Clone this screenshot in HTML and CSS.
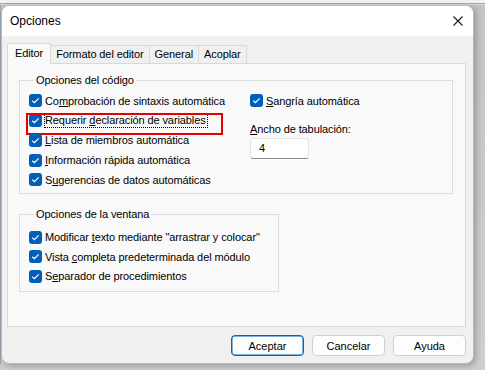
FILE: index.html
```html
<!DOCTYPE html>
<html lang="es">
<head>
<meta charset="utf-8">
<title>Opciones</title>
<link rel="stylesheet" href="styles.css">
</head>
<body>
<div class="desktop">
  <div class="topstrip"></div>
  <div class="stage">
    <div class="window">
      <div class="titlebar">
        <span class="title">Opciones</span>
        <svg class="close" width="10" height="10" viewBox="0 0 10 10"><path d="M0.5 0.5L9.5 9.5M9.5 0.5L0.5 9.5" stroke="#1a1a1a" stroke-width="1.1" fill="none"/></svg>
      </div>
      <div class="client">
        <div class="tabs">
          <div class="tab active">Editor</div>
          <div class="tab">Formato del editor</div>
          <div class="tab">General</div>
          <div class="tab">Acoplar</div>
        </div>
        <div class="panel">
          <fieldset class="group group-code">
            <legend>Opciones del código</legend>
            <div class="cols">
              <div class="col col-left">
                <div class="row"><span class="cb"><svg viewBox="0 0 13 13"><path d="M3.3 6.7L5.4 8.7L9.7 4.4" /></svg></span><span class="lbl">Co<u>m</u>probación de sintaxis automática</span></div>
                <div class="row focus"><span class="cb"><svg viewBox="0 0 13 13"><path d="M3.3 6.7L5.4 8.7L9.7 4.4" /></svg></span><span class="lbl dotted">Requerir <u>d</u>eclaración de variables</span></div>
                <div class="row"><span class="cb"><svg viewBox="0 0 13 13"><path d="M3.3 6.7L5.4 8.7L9.7 4.4" /></svg></span><span class="lbl"><u>L</u>ista de miembros automática</span></div>
                <div class="row"><span class="cb"><svg viewBox="0 0 13 13"><path d="M3.3 6.7L5.4 8.7L9.7 4.4" /></svg></span><span class="lbl"><u>I</u>nformación rápida automática</span></div>
                <div class="row"><span class="cb"><svg viewBox="0 0 13 13"><path d="M3.3 6.7L5.4 8.7L9.7 4.4" /></svg></span><span class="lbl">S<u>u</u>gerencias de datos automáticas</span></div>
              </div>
              <div class="col col-right">
                <div class="row"><span class="cb"><svg viewBox="0 0 13 13"><path d="M3.3 6.7L5.4 8.7L9.7 4.4" /></svg></span><span class="lbl"><u>S</u>angría automática</span></div>
                <div class="field-label"><u>A</u>ncho de tabulación:</div>
                <div class="input">4</div>
              </div>
            </div>
          </fieldset>
          <fieldset class="group group-win">
            <legend>Opciones de la ventana</legend>
            <div class="row"><span class="cb"><svg viewBox="0 0 13 13"><path d="M3.3 6.7L5.4 8.7L9.7 4.4" /></svg></span><span class="lbl">Modificar <u>t</u>exto mediante "arrastrar y colocar"</span></div>
            <div class="row"><span class="cb"><svg viewBox="0 0 13 13"><path d="M3.3 6.7L5.4 8.7L9.7 4.4" /></svg></span><span class="lbl">Vista <u>c</u>ompleta predeterminada del módulo</span></div>
            <div class="row"><span class="cb"><svg viewBox="0 0 13 13"><path d="M3.3 6.7L5.4 8.7L9.7 4.4" /></svg></span><span class="lbl">S<u>e</u>parador de procedimientos</span></div>
          </fieldset>
        </div>
        <div class="buttons">
          <button class="btn default">Aceptar</button>
          <button class="btn">Cancelar</button>
          <button class="btn">Ayuda</button>
        </div>
      </div>
    </div>
    <div class="shadow-right"></div>
  </div>
</div>
</body>
</html>
```

FILE: styles.css
```css
* { box-sizing: border-box; }
html, body { margin: 0; padding: 0; }
body {
  width: 485px;
  height: 370px;
  overflow: hidden;
  background: #cdcdcd;
  font-family: "Liberation Sans", Arial, sans-serif;
  font-size: 11px;
  letter-spacing: -0.1px;
  color: #000;
}
.desktop {
  display: flex;
  flex-direction: column;
  height: 370px;
  background: linear-gradient(to bottom, #c4c4c4, #cfcfcf);
}
.topstrip {
  height: 5px;
  background: linear-gradient(to bottom, #f2f2f2 0, #f2f2f2 3px, #a8a8a8 3px, #a8a8a8 4px, #dcdcdc 4px);
}
.stage {
  display: flex;
  padding-left: 1px;
  background: linear-gradient(to right, #9aa7b5 0, #9aa7b5 1px, transparent 1px);
}
.window {
  width: 473px;
  height: 359px;
  border: 1px solid #b9b9b9;
  border-radius: 8px;
  background: #f0f0f0;
  overflow: hidden;
  display: flex;
  flex-direction: column;
  box-shadow: 2px 2px 6px rgba(0,0,0,0.25);
}
.titlebar {
  height: 30px;
  background: #ffffff;
  display: flex;
  align-items: center;
  justify-content: space-between;
  padding: 0 10px 0 8px;
}
.title { font-size: 12px; line-height: 16px; letter-spacing: 0; }
.close { display: block; }
.client {
  flex: 1;
  display: flex;
  flex-direction: column;
  padding: 7px 7px 0 5px;
}
.tabs {
  display: flex;
  align-items: flex-end;
  height: 20px;
  position: relative;
  z-index: 1;
}
.tab {
  height: 18px;
  line-height: 17px;
  padding: 0 5px 0 5px;
  border: 1px solid #d9d9d9;
  border-bottom: none;
  border-left: none;
  background: #f0f0f0;
}
.tab.active {
  height: 21px;
  margin-bottom: -1px;
  padding: 1px 7px 0 7px;
  line-height: 16px;
  border-left: 1px solid #d9d9d9;
  background: #f9f9f9;
}
.panel {
  height: 264px;
  background: #f9f9f9;
  border: 1px solid #d9d9d9;
  padding: 8px 12px 0 11px;
  display: flex;
  flex-direction: column;
}
.group {
  margin: 0;
  border: 1px solid #dcdcdc;
  min-width: 0;
}
.group legend {
  padding: 0 2px;
  margin-left: 5px;
  line-height: 16px;
}
.group-code {
  height: 122px;
  padding: 3px 0 0 9px;
}
.group-win {
  width: 260px;
  height: 86px;
  margin-top: 12px;
  padding: 5.5px 0 0 9px;
}
.cols { display: flex; }
.col-left { width: 221px; }
.row {
  display: flex;
  align-items: center;
  height: 19.75px;
  position: relative;
}
.group-win .row { height: 19.5px; }
.cb {
  width: 13px;
  height: 13px;
  border-radius: 3px;
  background: #005fb8;
  flex: none;
  margin-right: 3px;
  display: block;
}
.cb svg { display: block; width: 13px; height: 13px; }
.cb path { fill: none; stroke: #ffffff; stroke-width: 1.2; }
.lbl { white-space: nowrap; line-height: 16px; }
.lbl u { text-underline-offset: 1px; }
.dotted {
  border: 1px dotted #000;
  line-height: 13px;
  margin-left: -1px;
  padding-right: 1px;
}
.focus::after {
  content: "";
  position: absolute;
  left: -3px;
  top: 2px;
  width: 193px;
  height: 18px;
  border: 2px solid #e60000;
}
.field-label {
  height: 19px;
  line-height: 20px;
  margin-top: 8px;
}
.input {
  width: 59px;
  height: 21px;
  background: #fff;
  border: 1px solid #e5e5e5;
  border-bottom: 1px solid #8a8a8a;
  border-radius: 3px;
  padding-left: 8px;
  line-height: 19px;
}
.buttons {
  display: flex;
  justify-content: flex-end;
  gap: 8px;
  padding-top: 8px;
}
.btn {
  width: 73px;
  height: 21px;
  font: inherit;
  font-size: 11px;
  color: #000;
  background: #fdfdfd;
  border: 1px solid #d0d0d0;
  border-radius: 4px;
  padding: 0;
}
.btn.default {
  border: 1px solid #0067c0;
  box-shadow: inset 0 0 0 0.5px #0067c0;
}
.shadow-right { flex: 1; }
```
